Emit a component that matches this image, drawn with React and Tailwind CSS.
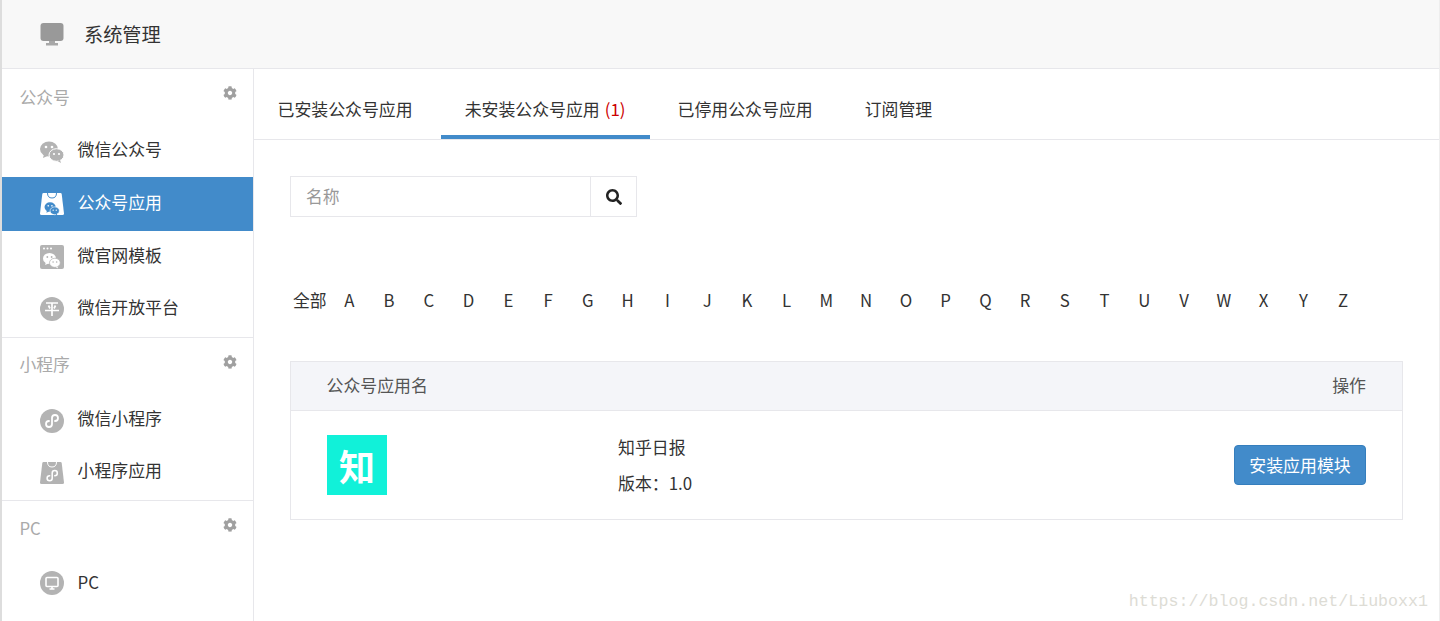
import React from "react";
import { FaCog, FaSearch } from "react-icons/fa";

const letters = "ABCDEFGHIJKLMNOPQRSTUVWXYZ".split("");
const tabs = ["已安装公众号应用", "未安装公众号应用", "已停用公众号应用", "订阅管理"];

const Bubbles = ({ fill, eye, x = 0, y = 0, s = 1 }) => (
  <g transform={`translate(${x} ${y}) scale(${s})`}>
    <ellipse cx="9" cy="9" rx="9" ry="7.6" fill={fill} />
    <path d="M4 14l-1 4 4.500-2z" fill={fill} />
    <circle cx="6" cy="7" r="1.300" fill={eye} />
    <circle cx="12" cy="7" r="1.300" fill={eye} />
    <ellipse cx="16.500" cy="15" rx="7.500" ry="6.300" fill={fill} stroke={eye} strokeWidth="1" />
    <path d="M20 20l1 3-3.500-2z" fill={fill} />
    <circle cx="14" cy="14" r="1.100" fill={eye} />
    <circle cx="19" cy="14" r="1.100" fill={eye} />
  </g>
);

// mini program mark: stem with two open loops, drawn around 12,12
const Link = ({ color, x = 0, y = 0, s = 1 }) => (
  <path
    transform={`translate(${x} ${y}) scale(${s})`}
    d="M9 12a3 3 0 1 0 3 3V9a3 3 0 1 1 3 3"
    fill="none"
    stroke={color}
    strokeWidth="1.800"
    strokeLinecap="round"
  />
);

const WechatIcon = () => (
  <svg width="24" height="24" viewBox="0 0 24 24">
    <Bubbles fill="#b3b3b3" eye="#fff" y="1" />
  </svg>
);

const BagIcon = ({ bag, inner }) => (
  <svg width="24" height="24" viewBox="0 0 24 24">
    <path d="M3.500 1h17q1 0 1.200 1L24 21.500q0 1.500-1.500 1.500h-21Q0 23 0 21.500L2.300 2q.2-1 1.200-1z" fill={bag} />
    <path d="M7.500 1q0 5 4.500 5t4.500-5" fill="none" stroke={inner} strokeWidth="1" />
    <Bubbles fill={inner} eye={bag} x="4.500" y="9.500" s="0.620" />
  </svg>
);

const MiniBagIcon = () => (
  <svg width="24" height="24" viewBox="0 0 24 24">
    <path d="M3.500 1h17q1 0 1.200 1L24 21.500q0 1.500-1.500 1.500h-21Q0 23 0 21.500L2.300 2q.2-1 1.200-1z" fill="#b3b3b3" />
    <path d="M7.500 1q0 5 4.500 5t4.500-5" fill="none" stroke="#fff" strokeWidth="1" />
    <Link color="#fff" x="2" y="4.500" s="0.850" />
  </svg>
);

const SiteIcon = () => (
  <svg width="24" height="24" viewBox="0 0 24 24">
    <rect width="24" height="24" rx="2" fill="#b3b3b3" />
    <circle cx="4" cy="3.500" r="1" fill="#fff" />
    <circle cx="7.500" cy="3.500" r="1" fill="#fff" />
    <circle cx="11" cy="3.500" r="1" fill="#fff" />
    <Bubbles fill="#fff" eye="#b3b3b3" x="3" y="7" s="0.720" />
  </svg>
);

const CircleIcon = ({ children }) => (
  <svg width="24" height="24" viewBox="0 0 24 24">
    <circle cx="12" cy="12" r="12" fill="#b3b3b3" />
    {children}
  </svg>
);

const PingIcon = () => (
  <CircleIcon>
    <path d="M6 6h12M8.500 8.500l1.500 3M15.500 8.500l-1.500 3M5 13.500h14M12 6v13" fill="none" stroke="#fff" strokeWidth="1.700" />
  </CircleIcon>
);

const MiniIcon = () => (
  <CircleIcon>
    <Link color="#fff" />
  </CircleIcon>
);

const PcIcon = () => (
  <CircleIcon>
    <rect x="6" y="6.500" width="12" height="9" rx="1" fill="none" stroke="#fff" strokeWidth="1.600" />
    <path d="M9.500 18h5M12 15.500V18" stroke="#fff" strokeWidth="1.600" />
  </CircleIcon>
);

const groups = [
  {
    title: "公众号",
    className: "h-[269px] border-b border-[#e7e7eb]",
    head: "h-[55px]",
    label: "translate-y-[1px]",
    text: "-translate-y-[2px]",
    items: [
      { name: "微信公众号", Icon: WechatIcon, row: "h-[53px]" },
      { name: "公众号应用", active: true, row: "h-[54px]" },
      { name: "微官网模板", Icon: SiteIcon, row: "h-[51px]" },
      { name: "微信开放平台", Icon: PingIcon, row: "h-[53px]" },
    ],
  },
  {
    title: "小程序",
    className: "h-[163px] border-b border-[#e7e7eb]",
    head: "h-[56px]",
    label: "-translate-y-[2px]",
    text: "-translate-y-[3.500px]",
    items: [
      { name: "微信小程序", Icon: MiniIcon, row: "h-[53px]" },
      { name: "小程序应用", Icon: MiniBagIcon, row: "h-[52px]" },
    ],
  },
  {
    title: "PC",
    className: "",
    head: "h-[55px]",
    label: "",
    text: "-translate-y-[1px]",
    items: [{ name: "PC", Icon: PcIcon, row: "h-[53px]" }],
  },
];

const SideGroup = ({ group }) => (
  <div className={group.className}>
    <div className={`relative flex items-center pl-[17.500px] pt-[1px] text-[16.800px] text-[#aaaaaa] ${group.head}`}>
      <span className={group.label}>{group.title}</span>
      <FaCog className="absolute right-[16px] top-[17px] text-[14px] text-[#a0a0a0]" />
    </div>
    {group.items.map((item) => (
      <div
        key={item.name}
        className={`flex items-center gap-[13.500px] pl-[38px] text-[16.900px] ${item.row} ${
          item.active ? "bg-[#428bca] text-white" : "text-[#333333]"
        }`}
      >
        {item.active ? <BagIcon bag="#ffffff" inner="#428bca" /> : <item.Icon />}
        <span className={group.text}>{item.name}</span>
      </div>
    ))}
  </div>
);

export default function App() {
  return (
    <div
      className="relative flex h-[621px] flex-col overflow-hidden border-r border-l-2 border-r-[#eeeeee] border-l-[#dddddd] bg-white text-[#333333]"
      style={{ fontFamily: '"Noto Sans CJK SC", "Noto Sans", sans-serif' }}
    >
      <header className="flex h-[69px] shrink-0 items-center gap-[20px] border-b border-[#e7e7eb] bg-[#f8f8f8] pl-[38px]">
        <svg width="24" height="24" viewBox="0 0 24 24">
          <rect x="0.500" y="1" width="23" height="18" rx="3" fill="#999999" />
          <path d="M9 19h6v2h3v2.500H6V21h3z" fill="#a8a8a8" />
        </svg>
        <span className="text-[19.200px]">系统管理</span>
      </header>

      <div className="flex min-h-0 flex-1">
        <aside className="w-[252px] shrink-0 border-r border-[#e7e7eb]">
          {groups.map((group) => (
            <SideGroup key={group.title} group={group} />
          ))}
        </aside>

        <main className="min-w-0 flex-1">
          <nav className="flex h-[71px] items-end gap-[4.500px] border-b border-[#e7e7eb]">
            {tabs.map((tab, i) => (
              <div
                key={tab}
                className={`flex h-[50px] items-center border-b-4 pr-[24px] pb-[6px] pl-[23.500px] text-[16.900px] ${
                  i === 1 ? "border-[#428bca]" : "border-transparent"
                }`}
              >
                {tab}
                {i === 1 && <span className="ml-[5px] text-[#cc0000]">(1)</span>}
              </div>
            ))}
          </nav>

          <div className="px-[36px] pt-[36px]">
            <div className="flex h-[41px] w-[347px] border border-[#e7e7eb]">
              <div className="flex flex-1 items-center pl-[15px] text-[16.800px] text-[#999999]">
                名称
              </div>
              <div className="flex w-[46px] items-center justify-center border-l border-[#e7e7eb] text-[16px] text-[#222222]">
                <FaSearch />
              </div>
            </div>

            <div className="mt-[71px] flex h-[26px] items-center text-[16.800px]">
              <span className="w-[39.500px] pl-[3px]">全部</span>
              {letters.map((letter) => (
                <span key={letter} className="w-[39.750px] text-center">
                  {letter}
                </span>
              ))}
            </div>

            <div className="mt-[47px] w-[1113px] border border-[#e7e7eb]">
              <div className="flex h-[49px] items-center justify-between border-b border-[#e7e7eb] bg-[#f4f5f9] pr-[36px] pb-[2px] pl-[35.500px] text-[16.900px] text-[#555555]">
                <span>公众号应用名</span>
                <span>操作</span>
              </div>
              <div className="flex h-[108px] items-center px-[36px] text-[16.900px]">
                <div className="flex h-[60px] w-[60px] shrink-0 items-center justify-center bg-[#11f1d9] text-[36px] font-bold text-white">
                  知
                </div>
                <div className="ml-[231px] flex flex-col gap-[11px] pb-[1px]">
                  <span className="leading-[25px]">知乎日报</span>
                  <span className="leading-[25px]">版本：1.0</span>
                </div>
                <button className="ml-auto h-[40px] w-[132px] rounded-[4px] border border-[#357ebd] bg-[#428bca] pb-[1px] text-[16.900px] text-white">
                  安装应用模块
                </button>
              </div>
            </div>
          </div>
        </main>
      </div>

      <div
        className="absolute right-[11px] bottom-[7px] text-[16.640px] leading-[24px] text-[#dddcd5]"
        style={{ fontFamily: '"Liberation Mono", monospace' }}
      >
        https://blog.csdn.net/Liuboxx1
      </div>
    </div>
  );
}
